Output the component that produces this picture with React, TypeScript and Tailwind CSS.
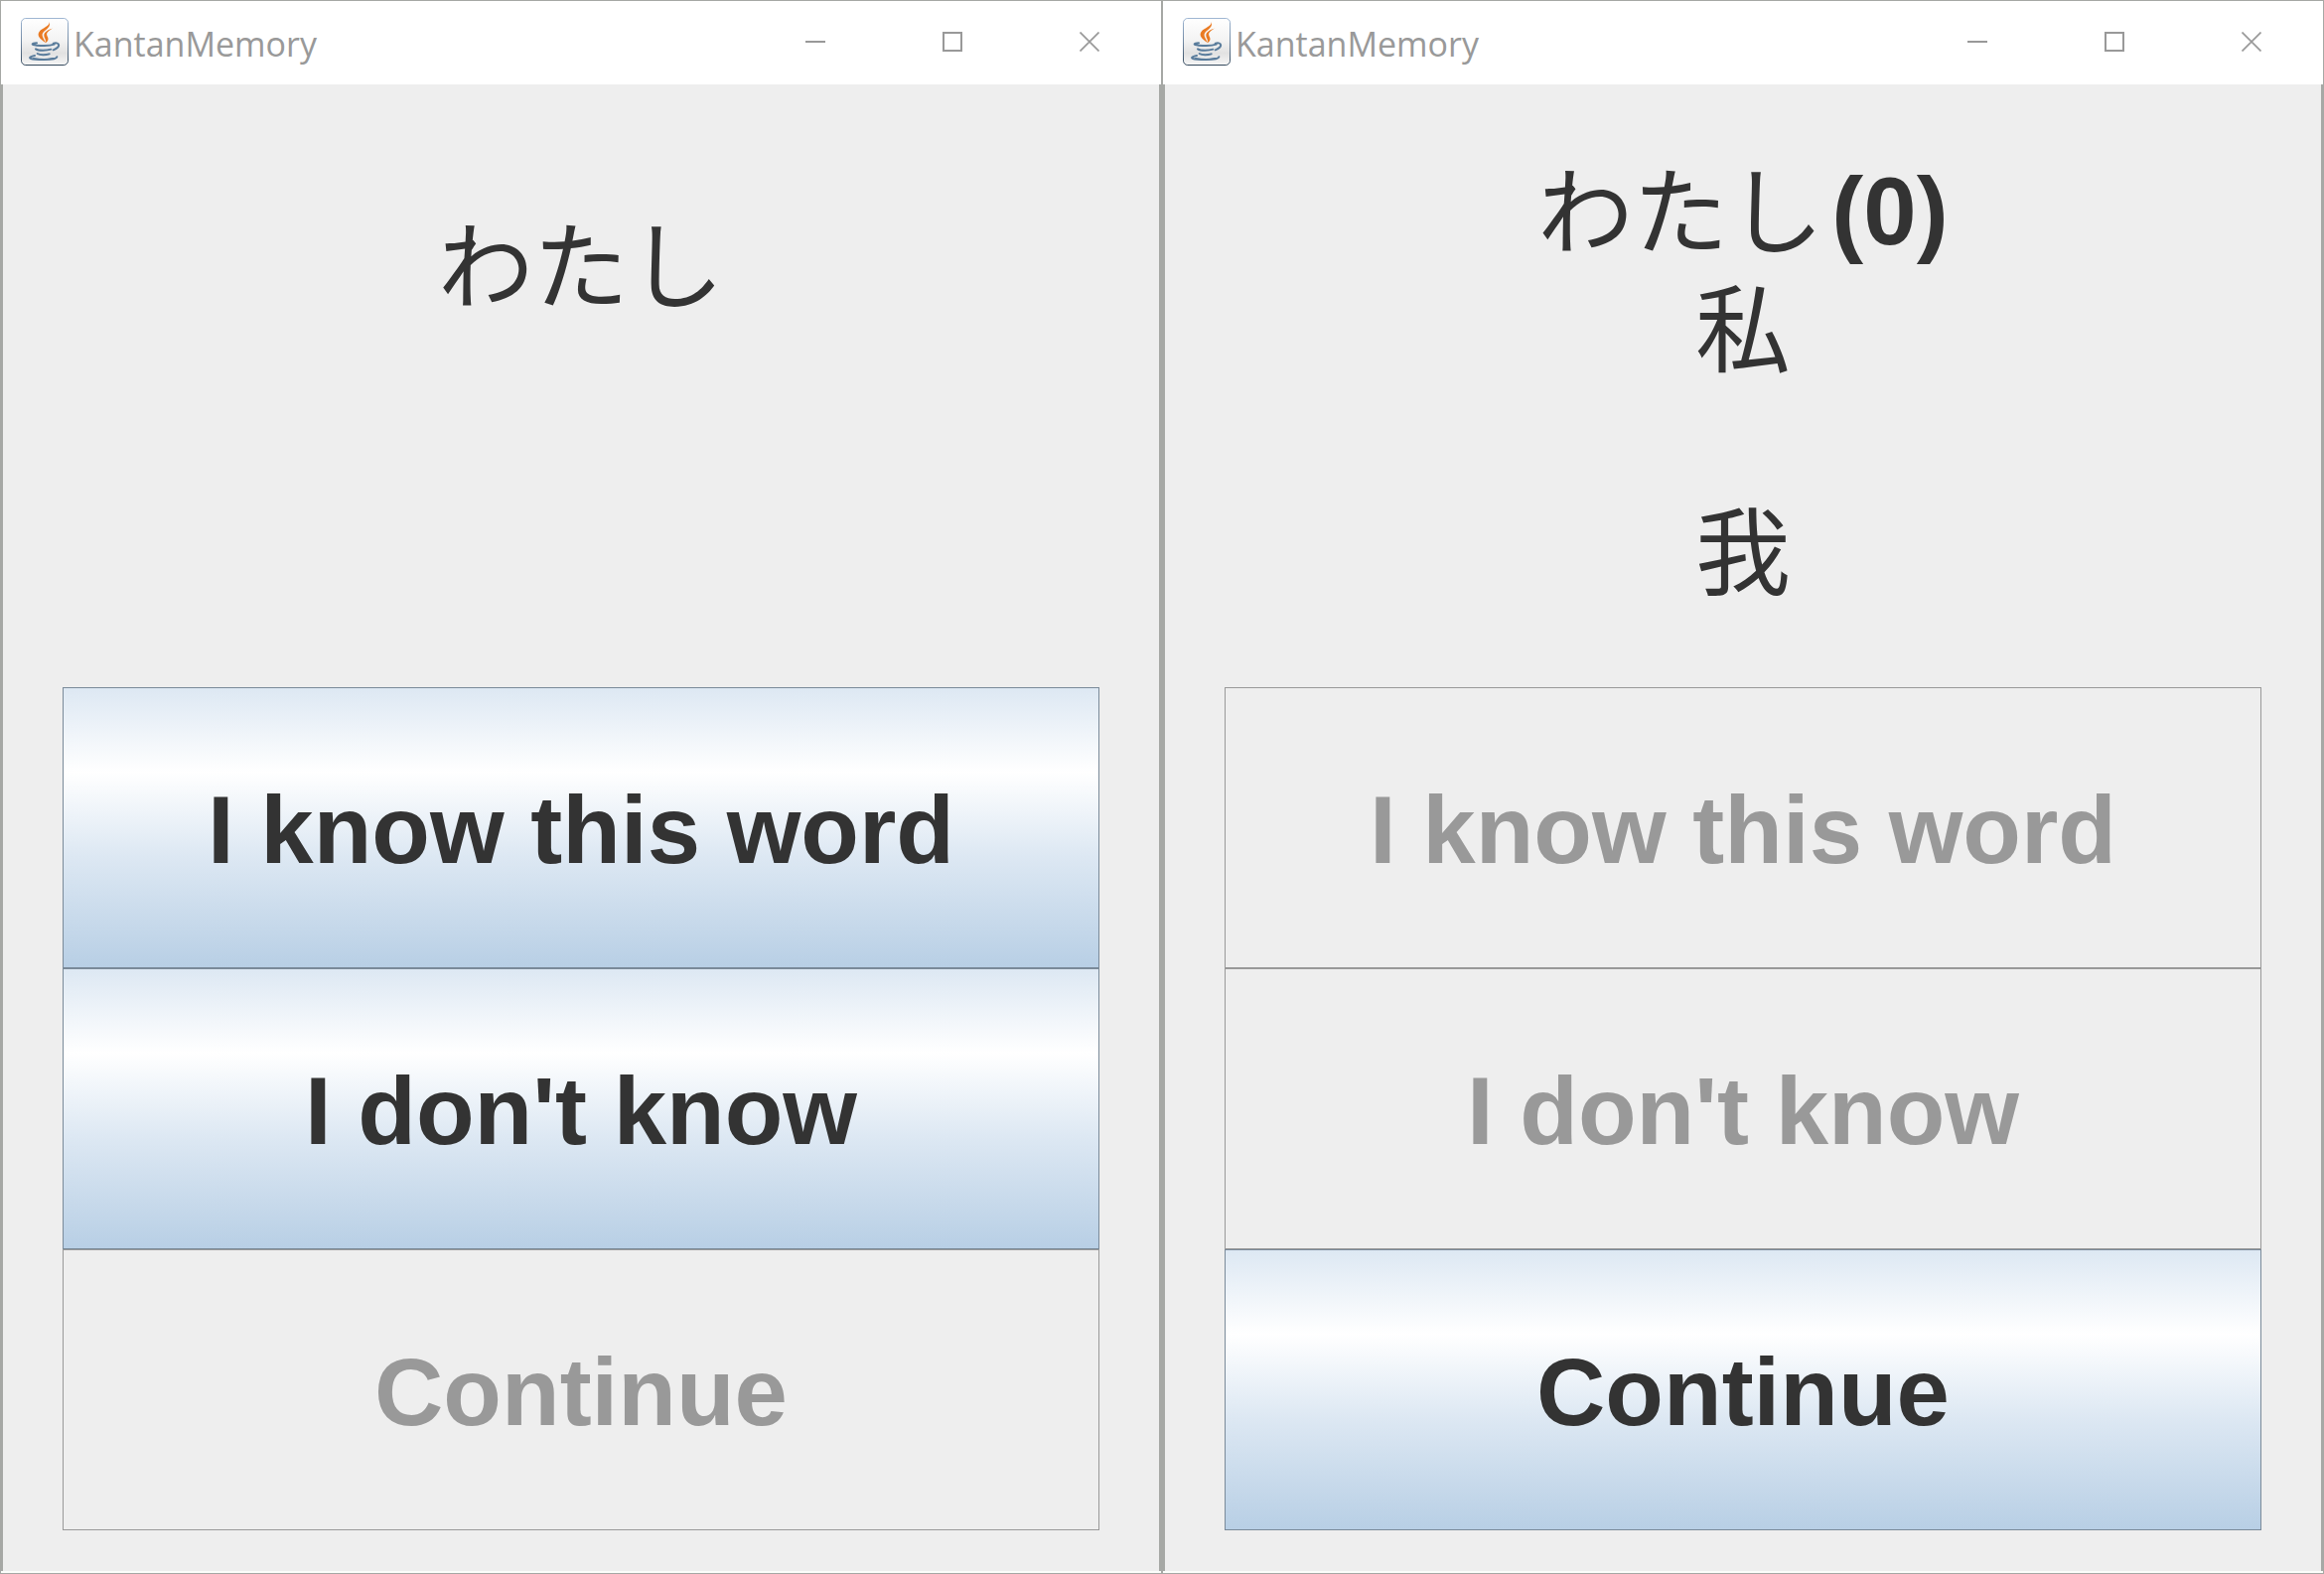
import React from "react";

type Line = { jp?: string; latin?: string };

function JavaIcon() {
  return (
    <svg viewBox="0 0 144 144" className="size-12 shrink-0" aria-hidden="true">
      <defs>
        <linearGradient id="face" x1="0" y1="0" x2="0" y2="1">
          <stop offset="0" stopColor="#ffffff" />
          <stop offset="0.45" stopColor="#f4f4f4" />
          <stop offset="0.75" stopColor="#e2e2e2" />
          <stop offset="1" stopColor="#f6f6f6" />
        </linearGradient>
        <linearGradient id="edge" x1="0" y1="0" x2="0" y2="1">
          <stop offset="0" stopColor="#9fb6d2" />
          <stop offset="0.5" stopColor="#7189a3" />
          <stop offset="1" stopColor="#34495d" />
        </linearGradient>
      </defs>
      <rect x="1.5" y="1.5" width="141" height="141" rx="13" fill="url(#face)" stroke="url(#edge)" strokeWidth="3" />
      <g fill="#ea7a22">
        <path d="M86 12 C91 27 78 34 69 42 C60 51 67 60 75 75 C58 64 47 53 56 41 C65 30 88 25 86 12 Z" />
        <path d="M98 31 C84 36 69 42 70 54 C71 62 77 65 74 76 C87 67 82 60 79 53 C76 44 86 38 98 31 Z" />
      </g>
      <g fill="none" stroke="#587b9b" strokeWidth="6" strokeLinecap="round">
        <path d="M48 76 C30 77 31 82 48 83 C68 85 90 84 101 80" />
        <path d="M98 77 C119 72 121 88 98 97" />
        <path d="M45 94 C54 100 78 99 91 95" />
        <path d="M50 108 C58 113 76 112 86 109" />
        <path d="M42 114 C18 119 24 125 55 126 C82 127 108 124 109 118" />
        <path d="M38 122 C58 126 82 126 98 122" strokeWidth="4" />
      </g>
    </svg>
  );
}

function TitleBar() {
  const control = "flex h-full w-[138px] items-center justify-center text-[#999999]";
  return (
    <header className="flex h-[84px] shrink-0 items-center bg-white pb-[2px] pl-5 pr-[3px]">
      <JavaIcon />
      <h1 className="ml-[5px] mt-1 flex-1 font-['Open_Sans',sans-serif] text-[34px] leading-[48px] text-[#999999]">
        KantanMemory
      </h1>
      <button type="button" aria-label="Minimize" className={control}>
        <span className="h-[2px] w-5 bg-[#999999]" />
      </button>
      <button type="button" aria-label="Maximize" className={control}>
        <span className="size-5 border-2 border-[#999999]" />
      </button>
      <button type="button" aria-label="Close" className={control}>
        <svg viewBox="0 0 20 20" className="size-5" stroke="currentColor" strokeWidth="1.7">
          <path d="M0.5 0.5 L19.5 19.5 M19.5 0.5 L0.5 19.5" />
        </svg>
      </button>
    </header>
  );
}

function AnswerButton({ label, disabled }: { label: string; disabled: boolean }) {
  return (
    <button
      type="button"
      disabled={disabled}
      className="h-[283px] w-full border border-[#7a8a99] bg-[linear-gradient(to_bottom,#dde8f3_0%,#ffffff_30%,#dde8f3_60%,#b8cfe5_100%)] pt-1 text-[96px] leading-[112px] font-bold text-[#333333] disabled:border-[#999999] disabled:bg-[#eeeeee] disabled:bg-none disabled:text-[#999999]"
    >
      {label}
    </button>
  );
}

function MemoryWindow({ lines, revealed }: { lines: Line[]; revealed: boolean }) {
  return (
    <section className="flex min-w-0 flex-1 flex-col border border-[#a6a8a5] bg-[#fbfdfa] pb-[2px]">
      <TitleBar />
      <div className="flex flex-1 flex-col border-x-2 border-[#a6a8a5] bg-[#eeeeee] px-[60px] pb-[41px]">
        <div
          className={
            revealed
              ? "flex flex-1 flex-col items-center pt-[65px]"
              : "flex flex-1 flex-col items-center pt-[120px]"
          }
        >
          {lines.map((line, i) => (
            <p key={i} className="flex h-28 items-center gap-2 text-[96px] leading-[112px] font-bold first:h-[126px]">
              {line.jp && (
                <span
                  lang="ja"
                  className="pb-3 font-['Noto_Sans_CJK_JP',sans-serif] text-[96px] leading-[100px] font-normal"
                >
                  {line.jp}
                </span>
              )}
              {line.latin && <span>{line.latin}</span>}
            </p>
          ))}
        </div>
        <AnswerButton label="I know this word" disabled={revealed} />
        <AnswerButton label="I don't know" disabled={revealed} />
        <AnswerButton label="Continue" disabled={!revealed} />
      </div>
    </section>
  );
}

export default function App() {
  return (
    <main className="flex min-h-screen font-['Liberation_Sans',Arial,sans-serif] text-[#333333]">
      <MemoryWindow revealed={false} lines={[{ jp: "わたし" }]} />
      <MemoryWindow
        revealed
        lines={[{ jp: "わたし", latin: "(0)" }, { jp: "私" }, {}, { jp: "我" }]}
      />
    </main>
  );
}
